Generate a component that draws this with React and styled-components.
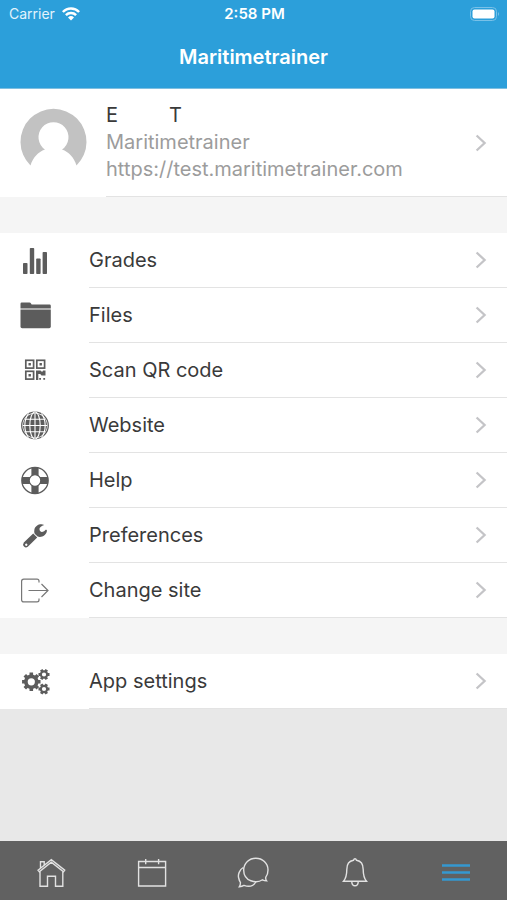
import React from 'react';
import styled, { createGlobalStyle } from 'styled-components';

const GlobalStyle = createGlobalStyle`
  *, *::before, *::after { box-sizing: border-box; }
  body {
    margin: 0;
    background: #e8e8e8;
    color: #3a3a3a;
    font-family: Inter, "Liberation Sans", sans-serif;
  }
`;

const Page = styled.div`
  min-height: 100vh;
  display: flex;
  flex-direction: column;
`;

const Header = styled.header`
  background: #2c9fda;
  color: #fff;
  border-bottom: 1px solid #7fbfe0;
`;

const StatusBar = styled.div`
  display: grid;
  grid-template-columns: 1fr auto 1fr;
  align-items: center;
  height: 27px;
  padding: 0 7px 0 9px;
  font-size: 14px;
  line-height: 16px;
`;

const Carrier = styled.span`
  display: flex;
  align-items: center;
  gap: 7px;
  color: #e2f3fc;
`;

const Clock = styled.time`
  font-size: 15px;
  font-weight: 600;
`;

const Battery = styled.span`
  display: flex;
  justify-self: end;
`;

const Title = styled.h1`
  margin: 0;
  padding: 16px 0 17px;
  text-align: center;
  font-size: 20px;
  line-height: 28px;
  font-weight: 600;
`;

const Content = styled.main`
  flex: 1;
`;

const Section = styled.section`
  background: #fff;
  & + & {
    border-top: 36px solid #f5f5f5;
  }
`;

const List = styled.ul`
  margin: 0;
  padding: 0;
  list-style: none;
`;

const RowLink = styled.a`
  display: flex;
  align-items: center;
  padding-left: 19px;
  color: inherit;
  text-decoration: none;
`;

const RowBody = styled.span`
  flex: 1;
  min-width: 0;
  display: flex;
  align-items: center;
  justify-content: space-between;
  min-height: ${(p) => (p.$tall ? '108px' : '55px')};
  margin-left: ${(p) => (p.$tall ? '19px' : '38px')};
  padding-right: 20px;
  border-bottom: 1px solid #e3e3e3;
  font-size: 20px;
  line-height: 27px;
`;

const Lines = styled.span`
  display: flex;
  flex-direction: column;
`;

const Name = styled.span`
  display: flex;
  gap: 51px;
`;

const Muted = styled.span`
  color: #9c9c9c;
`;

const Glyph = styled.svg`
  display: block;
  flex: none;
  overflow: visible;
`;

const TabBar = styled.nav`
  position: sticky;
  bottom: 0;
  display: grid;
  grid-template-columns: repeat(5, 1fr);
  height: 59px;
  background: #616161;
`;

const Tab = styled.button`
  display: flex;
  align-items: center;
  justify-content: center;
  padding: 5px 0 0;
  border: 0;
  background: none;
  color: ${(p) => (p.$active ? '#3598d0' : '#e2e2e2')};
  cursor: pointer;
`;

const Icon = ({ children }) => (
  <Glyph width="32" height="32" viewBox="0 0 32 32" fill="#5c5c5c" aria-hidden="true">
    {children}
  </Glyph>
);

const TabIcon = ({ children, weight = 1.4 }) => (
  <Glyph width="32" height="32" viewBox="0 0 32 32" fill="none" stroke="currentColor" strokeWidth={weight} aria-hidden="true">
    {children}
  </Glyph>
);

const Chevron = () => (
  <Glyph width="12" height="18" viewBox="0 0 12 18" fill="none" stroke="#c4c4c7" strokeWidth="2.3" aria-hidden="true">
    <path d="M1.6 1.5 9.6 9 1.6 16.5" />
  </Glyph>
);

function gearPath(cx, cy, outer, inner, hole, teeth) {
  const points = [];
  const step = (Math.PI * 2) / teeth;
  for (let i = 0; i < teeth; i += 1) {
    [[-0.32, inner], [-0.24, outer], [0.24, outer], [0.32, inner]].forEach(([shift, radius]) => {
      const angle = (i + shift) * step;
      points.push(`${(cx + radius * Math.cos(angle)).toFixed(2)} ${(cy + radius * Math.sin(angle)).toFixed(2)}`);
    });
  }
  return `M${points.join('L')}Z M${cx - hole} ${cy}a${hole} ${hole} 0 1 0 ${hole * 2} 0a${hole} ${hole} 0 1 0 ${-hole * 2} 0Z`;
}

const GradesIcon = () => (
  <Icon>
    <rect x="4" y="18" width="4.5" height="11" rx="0.8" />
    <rect x="10.8" y="3" width="4.4" height="26" rx="0.8" />
    <rect x="17.2" y="13.5" width="4.4" height="15.5" rx="0.8" />
    <rect x="23.6" y="7" width="4.4" height="22" rx="0.8" />
  </Icon>
);

const FilesIcon = () => (
  <Icon>
    <path d="M1.5 8.4V3.8Q1.5 2.6 2.7 2.6H10.5Q11.5 2.6 12 3.6L12.6 4.6H30.6Q31.8 4.6 31.8 5.8V8.4Z" />
    <path d="M1.5 9.6H31.8V26.6Q31.8 28.2 30.2 28.2H3.1Q1.5 28.2 1.5 26.6Z" />
  </Icon>
);

const QrIcon = () => (
  <Icon>
    <g fill="none" stroke="#5c5c5c" strokeWidth="1.7">
      <rect x="6.8" y="5.3" width="7.8" height="7.8" />
      <rect x="17.8" y="5.3" width="7.8" height="7.8" />
      <rect x="6.8" y="16.3" width="7.8" height="7.8" />
    </g>
    <path d="M9.5 8h2.4v2.4H9.5ZM20.5 8h2.4v2.4h-2.4ZM9.5 19h2.4v2.4H9.5ZM17 15.5h4.5l1.6 1.4 1-1.4h2.4v5H22.5l-1.3-1.5H19.3V25H17ZM20.2 23h1.8v1.8h-1.8ZM24.3 23h1.8v1.8h-1.8Z" />
  </Icon>
);

const WebsiteIcon = () => (
  <Icon>
    <circle cx="16" cy="15.5" r="13.3" fill="#fff" stroke="#5c5c5c" strokeWidth="1.3" />
    <circle cx="16" cy="15.5" r="12" />
    <g fill="none" stroke="#fff" strokeWidth="1.1">
      <path d="M16 3.5V27.5M4 15.5H28M6 9.3H26M6 21.7H26" />
      <ellipse cx="16" cy="15.5" rx="5.2" ry="13.5" />
      <path d="M9.5 3.5C4.6 10 4.6 21 9.5 27.5M22.5 3.5C27.4 10 27.4 21 22.5 27.5" />
    </g>
  </Icon>
);

const HelpIcon = () => (
  <Icon>
    <circle cx="16" cy="15.5" r="13.2" fill="#fff" />
    <path d="M12.4 2.5H19.6V28.5H12.4ZM3 11.9H29V19.1H3Z" />
    <circle cx="16" cy="15.5" r="13.2" fill="none" stroke="#5c5c5c" strokeWidth="1.3" />
    <circle cx="16" cy="15.5" r="5.8" fill="#fff" stroke="#5c5c5c" strokeWidth="1.2" />
  </Icon>
);

const PreferencesIcon = () => (
  <Icon>
    <path
      fillRule="evenodd"
      d="M25.2 4.9C21 3.2 16.4 5.4 15.4 9.6Q14.9 11.8 15.7 13.7L18.6 16.6C22.6 18 27.4 15.4 28 10.6L27 9.6Q25 12.3 22.6 12Q20.4 11.4 20.4 9Q20.9 6.4 25.2 4.9ZM14.2 13.4 4.8 22.6Q3.4 24.6 5 26.6Q6.8 28.2 8.8 26.8L18.2 17.4ZM7.2 23.5a1.2 1.2 0 1 0 .1 0Z"
    />
  </Icon>
);

const ChangeSiteIcon = () => (
  <Icon>
    <path
      d="M20 7.5V6Q20 4.1 18 4.1H4.8Q2.6 4.1 2.6 6.3V24.7Q2.6 26.9 4.8 26.9H18Q20 26.9 20 25V23.5M9.5 15.5H29M22.5 9 29 15.5 22.5 22"
      fill="none"
      stroke="#777"
      strokeWidth="1.2"
    />
  </Icon>
);

const SettingsIcon = () => (
  <Icon>
    <g fillRule="evenodd">
      <path d={gearPath(12.3, 15.8, 9.4, 7.3, 3.6, 8)} />
      <path d={gearPath(25, 8.5, 5.7, 4.2, 2.1, 6)} />
      <path d={gearPath(25, 23, 5.7, 4.2, 2.1, 6)} />
    </g>
  </Icon>
);

const HomeIcon = () => (
  <TabIcon>
    <path d="M3 13.2 16.3 2.7 29.7 13.2 28.5 14.7 16.3 5.2 4.3 14.7ZM5.5 11V4.7H9.2V8M5 14.5V29.3H12.5V19.3H20.5V29.3H27.8V14.5" />
  </TabIcon>
);

const CalendarIcon = () => (
  <TabIcon>
    <path d="M2.6 4.5H29.6V29H2.6ZM2.6 10.5H29.6M9.7 2V7.2M22.6 2V7.2" />
  </TabIcon>
);

const MessagesIcon = () => (
  <TabIcon>
    <path d="M29.6 23.8Q27.2 23.7 25.5 22.8C19.5 27 6.7 24.3 6.7 13.2C6.7 6 12.4 1.3 18.8 1.3C25.4 1.3 31 6.2 31 13C31 16.3 30 18.6 28.8 20.2Q28.4 22.2 29.6 23.8Z" />
    <path d="M6.3 10.5C2.4 12.5.7 18 1.7 21Q2.2 23.7 3.4 25.3Q3.6 28 2.4 29.7Q5 29.5 7 28.4C11 29.8 16 29.8 18.8 25" />
  </TabIcon>
);

const NotificationsIcon = () => (
  <TabIcon>
    <path d="M14.5 3.3Q15 1.7 16 1.7Q17 1.7 17.5 3.3C22 4 24.2 7.6 24.2 12.5C24.2 18 25.2 21.5 27.5 24.3H4.5C6.8 21.5 7.8 18 7.8 12.5C7.8 7.6 10 4 14.5 3.3ZM12.8 25C13 30 19 30 19.2 25" />
  </TabIcon>
);

const MoreIcon = () => (
  <TabIcon weight={2.6}>
    <path d="M2 8.5H30M2 15.5H30M2 22.5H30" />
  </TabIcon>
);

const siteItems = [
  { label: 'Grades', href: '#grades', Symbol: GradesIcon },
  { label: 'Files', href: '#files', Symbol: FilesIcon },
  { label: 'Scan QR code', href: '#scan', Symbol: QrIcon },
  { label: 'Website', href: '#website', Symbol: WebsiteIcon },
  { label: 'Help', href: '#help', Symbol: HelpIcon },
  { label: 'Preferences', href: '#preferences', Symbol: PreferencesIcon },
  { label: 'Change site', href: '#change-site', Symbol: ChangeSiteIcon },
];

const appItems = [{ label: 'App settings', href: '#settings', Symbol: SettingsIcon }];

const tabs = [
  { label: 'Home', Symbol: HomeIcon },
  { label: 'Calendar', Symbol: CalendarIcon },
  { label: 'Messages', Symbol: MessagesIcon },
  { label: 'Notifications', Symbol: NotificationsIcon },
  { label: 'More', Symbol: MoreIcon, active: true },
];

const MenuList = ({ items }) => (
  <Section>
    <List>
      {items.map(({ label, href, Symbol }) => (
        <li key={href}>
          <RowLink href={href}>
            <Symbol />
            <RowBody>
              {label}
              <Chevron />
            </RowBody>
          </RowLink>
        </li>
      ))}
    </List>
  </Section>
);

export default function App() {
  return (
    <Page>
      <GlobalStyle />
      <Header>
        <StatusBar>
          <Carrier>
            Carrier
            <Glyph width="18" height="14" viewBox="0 0 18 14" fill="none" stroke="#fff" strokeWidth="2.5" aria-hidden="true">
              <path d="M.9 5C5.3.4 12.7.4 17.1 5M3.9 8.2C6.7 5.4 11.3 5.4 14.1 8.2" />
              <path d="M6 10.4Q9 7.8 12 10.4L9 13.4Z" fill="#fff" stroke="none" />
            </Glyph>
          </Carrier>
          <Clock>2:58 PM</Clock>
          <Battery>
            <Glyph width="30" height="14" viewBox="0 0 30 14" aria-hidden="true">
              <rect x="0.5" y="0.5" width="26" height="13" rx="4" fill="none" stroke="#79c1e8" />
              <rect x="2.5" y="2.5" width="22" height="9" rx="2" fill="#fff" />
              <path d="M28 5Q30 7 28 9Z" fill="#79c1e8" />
            </Glyph>
          </Battery>
        </StatusBar>
        <Title>Maritimetrainer</Title>
      </Header>
      <Content>
        <Section>
          <RowLink href="#profile">
            <Glyph width="68" height="68" viewBox="0 0 68 68" aria-hidden="true">
              <path
                d="M11.5 56.5A33 33 0 1 1 57.5 56.5C55 48.5 50 43 43 40.5A15 15 0 1 0 26 40.5C19 43 14 48.5 11.5 56.5Z"
                fill="#c2c2c2"
              />
            </Glyph>
            <RowBody $tall>
              <Lines>
                <Name>
                  <span>E</span>
                  <span>T</span>
                </Name>
                <Muted>Maritimetrainer</Muted>
                <Muted>https://test.maritimetrainer.com</Muted>
              </Lines>
              <Chevron />
            </RowBody>
          </RowLink>
        </Section>
        <MenuList items={siteItems} />
        <MenuList items={appItems} />
      </Content>
      <TabBar aria-label="Main">
        {tabs.map(({ label, Symbol, active }) => (
          <Tab key={label} type="button" aria-label={label} aria-current={active ? 'page' : undefined} $active={active}>
            <Symbol />
          </Tab>
        ))}
      </TabBar>
    </Page>
  );
}
